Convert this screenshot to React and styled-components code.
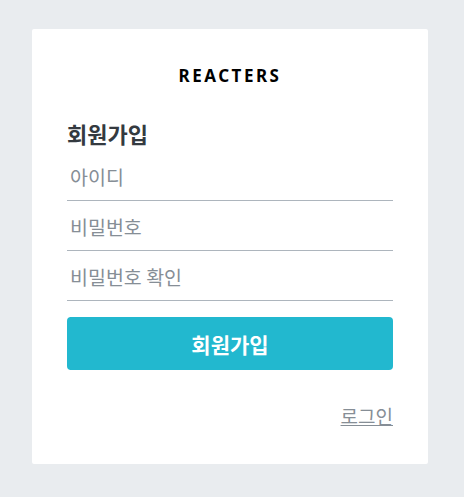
import React from 'react';
import styled, { createGlobalStyle } from 'styled-components';

const GlobalStyle = createGlobalStyle`
  html, body {
    margin: 0;
    padding: 0;
    background: #e9ecef;
  }

  body {
    font-family: 'Noto Sans', 'Noto Sans CJK KR', sans-serif;
  }
`;

const Page = styled.div`
  box-sizing: border-box;
  height: 497px;
  padding: 29px 36px 0 32px;
  width: 464px;
`;

const Card = styled.div`
  background: #fff;
  border-radius: 2px;
  box-sizing: border-box;
  padding: 35px;
  width: 396px;
`;

const Logo = styled.div`
  color: #000;
  font-size: 17px;
  font-weight: 700;
  letter-spacing: 2.5px;
  padding-bottom: 31px;
  text-align: center;
`;

const Heading = styled.h3`
  color: #343a40;
  font-family: 'Noto Sans CJK KR', sans-serif;
  font-size: 22px;
  font-weight: 700;
  line-height: 30px;
  margin: 0 0 3px;
`;

const Input = styled.input`
  border: none;
  border-bottom: 1px solid #adb5bd;
  box-sizing: border-box;
  color: #343a40;
  display: block;
  font-family: 'Noto Sans CJK KR', sans-serif;
  font-size: 19.5px;
  height: 50px;
  line-height: 28px;
  outline: none;
  padding: 11px 3px 9px;
  width: 100%;

  &::placeholder {
    color: #868e96;
  }
`;

const Button = styled.button`
  background: #22b8cf;
  border: none;
  border-radius: 4px;
  color: #fff;
  cursor: pointer;
  display: block;
  font-family: 'Noto Sans CJK KR', sans-serif;
  font-size: 21px;
  font-weight: 700;
  height: 53px;
  margin-top: 16px;
  width: 100%;
`;

const Footer = styled.div`
  margin-top: 32px;
  text-align: right;
`;

const FooterLink = styled.a`
  color: #868e96;
  font-family: 'Noto Sans CJK KR', sans-serif;
  font-size: 19px;
  text-decoration: underline;
`;

const App = () => (
  <Page>
    <GlobalStyle />
    <Card>
      <Logo>REACTERS</Logo>
      <Heading>회원가입</Heading>
      <form>
        <Input placeholder="아이디" />
        <Input type="password" placeholder="비밀번호" />
        <Input type="password" placeholder="비밀번호 확인" />
        <Button type="button">회원가입</Button>
      </form>
      <Footer>
        <FooterLink href="#login">로그인</FooterLink>
      </Footer>
    </Card>
  </Page>
);

export default App;
